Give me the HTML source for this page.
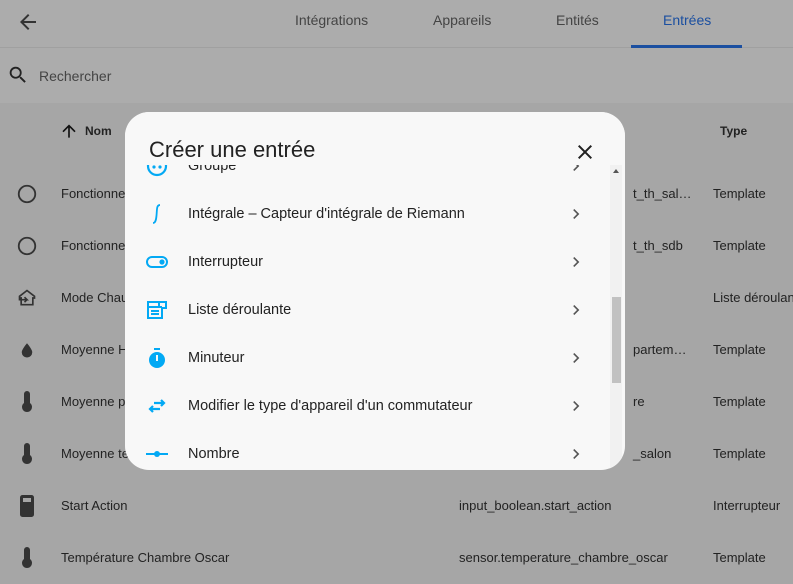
<!DOCTYPE html>
<html><head><meta charset="utf-8"><style>
*{margin:0;padding:0;box-sizing:border-box}
body{width:793px;height:584px;overflow:hidden;background:#a6a6a6;font-family:"Liberation Sans",sans-serif;position:relative;color:#222}
.top{position:absolute;left:0;top:0;width:793px;height:48px;background:#acacac;border-bottom:1px solid #a0a0a0}
.tab{position:absolute;top:12px;font-size:14px;color:#444}
.search{position:absolute;left:0;top:48px;width:793px;height:55px;background:#acacac}
.row{position:absolute;left:0;width:793px;height:52px;font-size:13px;color:#222;white-space:nowrap}
.row span{position:absolute;top:18px}
.dlg{position:absolute;left:125px;top:112px;width:500px;height:358px;background:#f8f8f8;border-radius:24px;overflow:hidden}
.item{position:absolute;left:0;width:485px;height:48px}
.item .t{position:absolute;left:63px;top:16px;font-size:14.5px;color:#222}
.item svg.i{position:absolute;left:20px;top:12px}
.item .ch{position:absolute;left:441px;top:14px}
</style></head><body>
<div class="top">
<svg style="position:absolute;left:16px;top:10px" width="24" height="24" viewBox="0 0 24 24"><path d="M20 11H7.8l5.6-5.6L12 4l-8 8 8 8 1.4-1.4L7.8 13H20z" fill="#333"/></svg>
<span class="tab" style="left:295px">Intégrations</span>
<span class="tab" style="left:433px">Appareils</span>
<span class="tab" style="left:556px">Entités</span>
<span class="tab" style="left:663px;color:#1b4fa0">Entrées</span>
<div style="position:absolute;left:631px;top:45px;width:111px;height:3px;background:#1b4fa0"></div>
</div>
<div class="search">
<svg style="position:absolute;left:7px;top:16px" width="22" height="22" viewBox="0 0 24 24"><path d="M9.5 3A6.5 6.5 0 0 1 16 9.5c0 1.6-.6 3.1-1.6 4.2l.3.3h.8l5 5-1.5 1.5-5-5v-.8l-.3-.3A6.5 6.5 0 1 1 9.5 3m0 2C7 5 5 7 5 9.5S7 14 9.5 14 14 12 14 9.5 12 5 9.5 5z" fill="#222"/></svg>
<span style="position:absolute;left:39px;top:20px;font-size:14px;color:#444">Rechercher</span>
</div>
<svg style="position:absolute;left:59px;top:121px" width="20" height="20" viewBox="0 0 24 24"><path d="M13 20h-2V8l-5.5 5.5-1.42-1.42L12 4.16l7.92 7.92-1.42 1.42L13 8z" fill="#111"/></svg>
<span style="position:absolute;left:85px;top:124px;font-size:12px;font-weight:bold">Nom</span>
<span style="position:absolute;left:720px;top:124px;font-size:12px;font-weight:bold">Type</span>

<div class="row" style="top:168px"><svg style="position:absolute;left:16px;top:15px" width="22" height="22" viewBox="0 0 24 24"><circle cx="12" cy="12" r="9" fill="none" stroke="#333" stroke-width="2"/></svg><span style="left:61px">Fonctionnement</span><span style="left:633px">t_th_sal…</span><span style="left:713px">Template</span></div>
<div class="row" style="top:220px"><svg style="position:absolute;left:16px;top:15px" width="22" height="22" viewBox="0 0 24 24"><circle cx="12" cy="12" r="9" fill="none" stroke="#333" stroke-width="2"/></svg><span style="left:61px">Fonctionnement</span><span style="left:633px">t_th_sdb</span><span style="left:713px">Template</span></div>
<div class="row" style="top:272px"><svg style="position:absolute;left:16px;top:16px" width="22" height="20" viewBox="0 0 24 24"><path d="M12 3L3 10v2h2v8h14v-8h2v-2zM2 14h10l-3-3m3 3l-3 3" fill="none" stroke="#333" stroke-width="2"/></svg><span style="left:61px">Mode Chauffage</span><span style="left:713px">Liste déroulante</span></div>
<div class="row" style="top:324px"><svg style="position:absolute;left:18px;top:17px" width="18" height="18" viewBox="0 0 24 24"><path d="M12 3s-7 8-7 12a7 7 0 0 0 14 0c0-4-7-12-7-12z" fill="#333"/></svg><span style="left:61px">Moyenne Humidité</span><span style="left:633px">partem…</span><span style="left:713px">Template</span></div>
<div class="row" style="top:376px"><svg style="position:absolute;left:15px;top:14px" width="24" height="24" viewBox="0 0 24 24"><path d="M9 4a3 3 0 0 1 6 0v9a5 5 0 1 1-6 0z" fill="#333"/></svg><span style="left:61px">Moyenne pièces</span><span style="left:633px">re</span><span style="left:713px">Template</span></div>
<div class="row" style="top:428px"><svg style="position:absolute;left:15px;top:14px" width="24" height="24" viewBox="0 0 24 24"><path d="M9 4a3 3 0 0 1 6 0v9a5 5 0 1 1-6 0z" fill="#333"/></svg><span style="left:61px">Moyenne température</span><span style="left:633px">_salon</span><span style="left:713px">Template</span></div>
<div class="row" style="top:480px"><svg style="position:absolute;left:15px;top:14px" width="24" height="24" viewBox="0 0 24 24"><rect x="5" y="1" width="14" height="22" rx="2.5" fill="#333"/><rect x="8" y="4" width="8" height="4" fill="#a6a6a6"/></svg><span style="left:61px">Start Action</span><span style="left:459px">input_boolean.start_action</span><span style="left:713px">Interrupteur</span></div>
<div class="row" style="top:532px"><svg style="position:absolute;left:15px;top:14px" width="24" height="24" viewBox="0 0 24 24"><path d="M9 4a3 3 0 0 1 6 0v9a5 5 0 1 1-6 0z" fill="#333"/></svg><span style="left:61px">Température Chambre Oscar</span><span style="left:459px">sensor.temperature_chambre_oscar</span><span style="left:713px">Template</span></div>

<div class="dlg">
<div style="position:absolute;left:0;top:53px;width:500px;height:305px;overflow:hidden">
 <div style="position:absolute;top:-5px;left:0;width:485px;height:330px">
  <div class="item" style="top:-18px"><svg class="i" width="24" height="24" viewBox="0 0 24 24"><circle cx="12" cy="12" r="9" fill="none" stroke="#03a9f4" stroke-width="2.2"/><circle cx="9" cy="13" r="1.6" fill="#03a9f4"/><circle cx="15" cy="13" r="1.6" fill="#03a9f4"/></svg><span class="t">Groupe</span><svg class="ch" width="20" height="20" viewBox="0 0 24 24"><path d="M8.6 16.6L13.2 12 8.6 7.4 10 6l6 6-6 6z" fill="#555"/></svg></div>
  <div class="item" style="top:30px"><svg class="i" width="24" height="24" viewBox="0 0 24 24"><path d="M15 3c-3 0-3 3-3.3 8S11 21 8 21" fill="none" stroke="#03a9f4" stroke-width="1.8"/></svg><span class="t">Intégrale – Capteur d'intégrale de Riemann</span><svg class="ch" width="20" height="20" viewBox="0 0 24 24"><path d="M8.6 16.6L13.2 12 8.6 7.4 10 6l6 6-6 6z" fill="#555"/></svg></div>
  <div class="item" style="top:78px"><svg class="i" width="24" height="24" viewBox="0 0 24 24"><rect x="2" y="7" width="20" height="10" rx="5" fill="none" stroke="#03a9f4" stroke-width="2"/><circle cx="17" cy="12" r="2.6" fill="#03a9f4"/></svg><span class="t">Interrupteur</span><svg class="ch" width="20" height="20" viewBox="0 0 24 24"><path d="M8.6 16.6L13.2 12 8.6 7.4 10 6l6 6-6 6z" fill="#555"/></svg></div>
  <div class="item" style="top:126px"><svg class="i" width="24" height="24" viewBox="0 0 24 24"><path d="M3 4h18v6h-4v10H3z" fill="none" stroke="#03a9f4" stroke-width="2"/><path d="M3 9h14M6 13h8M6 16h8M14 4v6" stroke="#03a9f4" stroke-width="2"/></svg><span class="t">Liste déroulante</span><svg class="ch" width="20" height="20" viewBox="0 0 24 24"><path d="M8.6 16.6L13.2 12 8.6 7.4 10 6l6 6-6 6z" fill="#555"/></svg></div>
  <div class="item" style="top:174px"><svg class="i" width="24" height="24" viewBox="0 0 24 24"><circle cx="12" cy="14" r="8" fill="#03a9f4"/><rect x="9" y="2" width="6" height="2" fill="#03a9f4"/><rect x="11" y="9" width="2" height="6" fill="#f8f8f8"/></svg><span class="t">Minuteur</span><svg class="ch" width="20" height="20" viewBox="0 0 24 24"><path d="M8.6 16.6L13.2 12 8.6 7.4 10 6l6 6-6 6z" fill="#555"/></svg></div>
  <div class="item" style="top:222px"><svg class="i" width="24" height="24" viewBox="0 0 24 24"><path d="M9 9h10M16 6l3 3-3 3M15 15H5M8 12l-3 3 3 3" fill="none" stroke="#03a9f4" stroke-width="2.2"/></svg><span class="t">Modifier le type d'appareil d'un commutateur</span><svg class="ch" width="20" height="20" viewBox="0 0 24 24"><path d="M8.6 16.6L13.2 12 8.6 7.4 10 6l6 6-6 6z" fill="#555"/></svg></div>
  <div class="item" style="top:270px"><svg class="i" width="24" height="24" viewBox="0 0 24 24"><path d="M1 12h22" stroke="#03a9f4" stroke-width="2"/><circle cx="12" cy="12" r="3" fill="#03a9f4"/></svg><span class="t">Nombre</span><svg class="ch" width="20" height="20" viewBox="0 0 24 24"><path d="M8.6 16.6L13.2 12 8.6 7.4 10 6l6 6-6 6z" fill="#555"/></svg></div>
 </div>
 <div style="position:absolute;left:485px;top:0;width:12px;height:305px;background:#f1f1f1"></div>
 <div style="position:absolute;left:487px;top:132px;width:9px;height:86px;background:#c1c1c1"></div>
 <div style="position:absolute;left:488px;top:4px;width:0;height:0;border-left:3px solid transparent;border-right:3px solid transparent;border-bottom:4px solid #555"></div>
</div>
<div style="position:absolute;left:0;top:0;width:500px;height:53px;background:#f8f8f8"></div>
<span style="position:absolute;left:24px;top:25px;font-size:22px;color:#222">Créer une entrée</span>
<svg style="position:absolute;left:448px;top:28px" width="24" height="24" viewBox="0 0 24 24"><path d="M19 6.4L17.6 5 12 10.6 6.4 5 5 6.4 10.6 12 5 17.6 6.4 19 12 13.4 17.6 19 19 17.6 13.4 12z" fill="#222"/></svg>
</div>
</body></html>
